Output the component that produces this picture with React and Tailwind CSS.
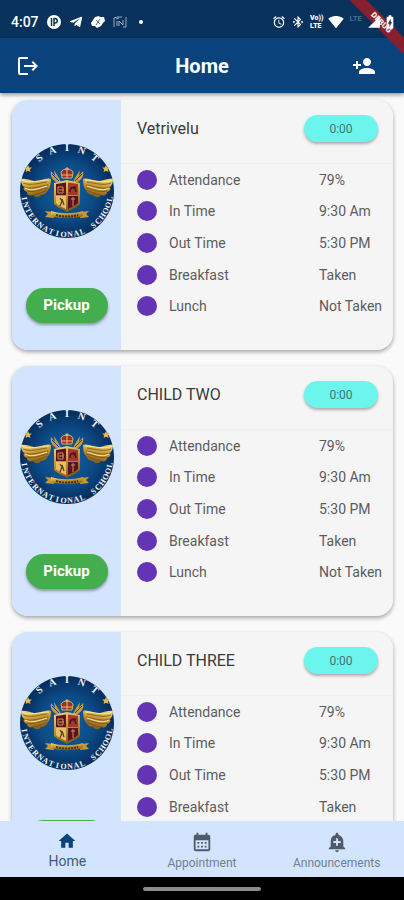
import React, { useState } from 'react';
import {
  MdAddAlert,
  MdAlarm,
  MdBatteryChargingFull,
  MdBluetoothConnected,
  MdCalendarMonth,
  MdHome,
  MdLogout,
  MdPersonAdd,
  MdSignalCellular4Bar,
  MdSignalWifi4Bar,
} from 'react-icons/md';
import { FaTelegramPlane } from 'react-icons/fa';

const CHILDREN = [
  { id: 1, name: 'Vetrivelu' },
  { id: 2, name: 'CHILD TWO' },
  { id: 3, name: 'CHILD THREE' },
];

const DETAILS = [
  ['Attendance', '79%'],
  ['In Time', '9:30 Am'],
  ['Out Time', '5:30 PM'],
  ['Breakfast', 'Taken'],
  ['Lunch', 'Not Taken'],
];

const TABS = [
  { id: 'home', label: 'Home', Icon: MdHome },
  { id: 'appointment', label: 'Appointment', Icon: MdCalendarMonth },
  { id: 'announcements', label: 'Announcements', Icon: MdAddAlert },
];

const TOP_LETTERS = 'SAINT'.split('');
const BOTTOM_LETTERS = 'INTERNATIONAL SCHOOL'.split('');

function Wing() {
  return (
    <g>
      <path
        d="M-16 -12 C-22 -14 -27 -9 -33 -10 C-38 -11 -42 -13 -46 -12 C-46 -8 -45 -6 -43 -4 C-44 -2 -43 0 -40 1 C-40 4 -37 5 -34 4 C-32 7 -28 7 -26 4 C-23 4 -20 2 -19 -1 C-17 -3 -16 -7 -16 -12Z"
        fill="url(#gold)"
      />
      <path
        d="M-44 -8 C-36 -5 -28 -8 -20 -9 M-43 -4 C-35 -1 -27 -5 -19 -6 M-40 0 C-33 2 -26 -2 -19 -3 M-34 4 C-29 3 -24 1 -20 -1"
        fill="none"
        stroke="#6b4a16"
        strokeWidth="0.7"
      />
      <path d="M-45 -11 C-37 -7 -28 -11 -18 -11 M-42 -3 C-35 1 -27 -3 -20 -5" fill="none" stroke="#fbe9a0" strokeWidth="1" />
    </g>
  );
}

function SchoolSeal() {
  return (
    <svg viewBox="-49 -49 98 98" className="size-[98px]" role="img" aria-label="School crest">
      <defs>
        <radialGradient id="seal">
          <stop offset="0" stopColor="#12629f" />
          <stop offset="0.6" stopColor="#0b4a85" />
          <stop offset="1" stopColor="#062c5c" />
        </radialGradient>
        <linearGradient id="gold" x1="0" y1="0" x2="0.3" y2="1">
          <stop offset="0" stopColor="#f5dc85" />
          <stop offset="0.5" stopColor="#c99a35" />
          <stop offset="1" stopColor="#8a601c" />
        </linearGradient>
      </defs>
      <circle r="47" fill="url(#seal)" />
      <g fill="#f3f6fa" fontFamily="Liberation Serif, serif" fontWeight="700" textAnchor="middle">
        {TOP_LETTERS.map((c, i) => (
          <text key={i} y="-40" fontSize="10" transform={`rotate(${(i - 2) * 20})`}>{c}</text>
        ))}
        {BOTTOM_LETTERS.map((c, i) => (
          <text key={i} y="46" fontSize="8" transform={`rotate(${80 - i * 8.4})`}>{c}</text>
        ))}
      </g>
      {/* side stars */}
      <path d="M-39 -26 l1.2 2.4 2.6 .2 -1.9 1.8 .6 2.6 -2.5 -1.3 -2.4 1.3 .5 -2.6 -1.9 -1.8 2.6 -.2z" fill="#e3b94f" />
      <path d="M39 -26 l1.2 2.4 2.6 .2 -1.9 1.8 .6 2.6 -2.5 -1.3 -2.4 1.3 .5 -2.6 -1.9 -1.8 2.6 -.2z" fill="#e3b94f" />
      <Wing />
      <g transform="scale(-1 1)">
        <Wing />
      </g>
      {/* crown and laurels */}
      <path d="M-11 -9 C-15 -12 -17 -15 -16 -20 L-12 -15 L-13 -21 L-8 -13 L-6 -9Z" fill="#c79b45" />
      <path d="M11 -9 C15 -12 17 -15 16 -20 L12 -15 L13 -21 L8 -13 L6 -9Z" fill="#c79b45" />
      <path d="M-15 -17 L-8 -10 M15 -17 L8 -10" stroke="#0d4c85" strokeWidth="1" />
      <path d="M-5 -13 L-6 -19 C-4 -23 4 -23 6 -19 L5 -13Z" fill="#982f2b" stroke="#d9b15a" strokeWidth="1" />
      <path d="M0 -24 V-13 M-2 -22 H2 M-5 -16 H5" stroke="#e5c06a" strokeWidth="1" />
      {/* shield */}
      <path d="M-13 -8 L0 -11 L13 -8 V13 C9 17 4 18 0 21 C-4 18 -9 17 -13 13Z" fill="url(#gold)" />
      <path d="M-11 -7 L-1 -8.500 V4 H-11Z M1 5 H11 V12 C8 15 4 16 1 18Z" fill="#5c1220" />
      <path d="M1 -8.500 L11 -7 V4 H1Z" fill="#a3382b" />
      <path d="M-11 5 H-1 V18 C-4 16 -8 15 -11 12Z" fill="#e3bf68" />
      <path d="M-9 -4 H-4 V2 H-9Z M-8 -1 H-3 M4 8 H8 M6 6 V15" stroke="#c9974a" strokeWidth="1" fill="none" />
      <path d="M3 1 C3 -5 8 -5 9 1 M4 -3 L9 -4" stroke="#45131a" strokeWidth="1.500" fill="none" />
      <path d="M-7 7 L-5 10 L-7 15 M-5 8 L-3 14" stroke="#5d3515" strokeWidth="1.200" fill="none" />
      {/* motto ribbon */}
      <path d="M-22 20 L-14 21 L-13 27 L-22 26 L-19 23Z M22 20 L14 21 L13 27 L22 26 L19 23Z" fill="#c99a3b" />
      <path d="M-16 20 C-6 23 6 23 16 20 V25 C6 28 -6 28 -16 25Z" fill="url(#gold)" />
      <path d="M-11 24 C-4 26 4 26 11 24" fill="none" stroke="#4c3110" strokeWidth="2" strokeDasharray="2 1" />
    </svg>
  );
}

function StatusBar() {
  return (
    <div className="flex h-[38px] shrink-0 items-center justify-between bg-[#08315c] pt-1.5 pr-1.5 pl-[11px] text-white">
      <div className="flex items-center gap-2">
        <span className="text-[14px] leading-4 font-medium">4:07</span>
        <svg viewBox="0 0 14 14" className="size-3.5">
          <circle cx="7" cy="7" r="7" fill="#fff" />
          <path d="M4.500 11 V3" fill="none" stroke="#08315c" strokeWidth="1.500" />
          <path d="M7 11 V3.500 H8 A2.200 2.200 0 0 1 8 8 H7" fill="none" stroke="#08315c" strokeWidth="1.500" />
        </svg>
        <FaTelegramPlane className="size-3.5" />
        <svg viewBox="0 0 14 12" className="h-3 w-3.5" fill="#fff">
          <path d="M4 1 L8 0 L9 1 L13 1 L14 5 L12 7 L10 10 L6 12 L4 10 L1 10 L0 7 L2 4Z" />
          <path d="M5 4 L9 8 M9 3 L5 9" stroke="#08315c" strokeWidth="0.7" />
        </svg>
        <svg viewBox="0 0 14 12" className="h-3 w-3.5 opacity-60" fill="none" stroke="#fff">
          <path d="M1 11 V2 L4 1 H9 M13 1 V11 H10 M4 10 V5 M6 10 V5 L10 9 V4 M3 3 L6 2" />
        </svg>
        <span className="ml-1 size-1 rounded-full bg-white" />
      </div>
      {/* sits above the debug ribbon */}
      <div className="relative z-20 flex items-center gap-[5px]">
        <MdAlarm className="size-3.5" />
        <MdBluetoothConnected className="size-3.5" />
        <span className="flex flex-col text-[7px] leading-[8px] font-black">
          <span>Vo))</span>
          <span>LTE</span>
        </span>
        <MdSignalWifi4Bar className="size-4" />
        <span className="-mt-1.5 text-[8px] leading-3 text-white/40">LTE</span>
        <MdSignalCellular4Bar className="size-3.5" />
        <MdBatteryChargingFull className="-ml-1 size-4" />
      </div>
    </div>
  );
}

function DebugBanner() {
  return (
    <div className="pointer-events-none absolute top-0 right-0 z-10 size-14 overflow-hidden">
      <div className="absolute top-[17px] -right-[27px] flex h-3 w-[100px] rotate-45 items-center justify-center bg-[#86202f] text-[8px] font-black text-white/90">
        DEBUG
      </div>
    </div>
  );
}

function ChildCard({ child }) {
  return (
    <article className="flex h-[250px] shrink-0 overflow-hidden rounded-2xl bg-[#f5f5f5] shadow-[0_2px_4px_rgba(0,0,0,0.35)]">
      <div className="flex w-[109px] flex-col items-center bg-[#d3e4ff] pt-[42px]">
        <SchoolSeal />
        <button className="mt-12 h-[35px] w-[82px] rounded-full bg-[#44ae4e] text-[15px] font-bold text-white shadow-[0_2px_3px_rgba(0,0,0,0.35)]">
          Pickup
        </button>
      </div>
      <div className="flex flex-1 flex-col pb-7">
        <header className="flex h-16 items-start justify-between border-b border-[#f0f0f0] pt-[15px] pr-[15px] pl-4">
          <h2 className="text-[16px] leading-[27px] text-[#3a3a3a]">{child.name}</h2>
          <button className="h-[27px] w-[74px] rounded-full bg-[#6cf5ec] text-[12px] text-[#3c7773] shadow-[0_2px_3px_rgba(0,0,0,0.3)]">
            0:00
          </button>
        </header>
        <dl className="flex flex-1 flex-col pl-4">
          {DETAILS.map(([label, value]) => (
            <div key={label} className="flex flex-1 items-center text-[14px] leading-5 text-[#5c5c5c]">
              <span className="mr-3 size-5 rounded-full bg-[#6534b5]" />
              <dt className="flex-1">{label}</dt>
              <dd className="w-[74px] whitespace-nowrap">{value}</dd>
            </div>
          ))}
        </dl>
      </div>
    </article>
  );
}

export default function App() {
  const [tab, setTab] = useState('home');

  return (
    <div className="relative flex h-screen flex-col overflow-hidden bg-[#fafafa] font-['Roboto',sans-serif]">
      <StatusBar />
      <header className="z-10 flex h-[55px] shrink-0 items-center justify-between bg-[#0a427c] px-4 text-white shadow-[0_2px_4px_rgba(0,0,0,0.4)]">
        <button aria-label="Log out" className="flex w-9">
          <MdLogout className="size-6" />
        </button>
        <h1 className="text-[20px] font-bold">Home</h1>
        <button aria-label="Add child" className="flex w-9">
          <MdPersonAdd className="size-6" />
        </button>
      </header>
      <DebugBanner />

      <main className="flex flex-1 flex-col gap-4 overflow-y-auto pt-[7px] pr-[11px] pl-3 [scrollbar-width:none]">
        {CHILDREN.map((c) => (
          <ChildCard key={c.id} child={c} />
        ))}
      </main>

      <nav className="z-10 grid h-14 shrink-0 grid-cols-3 bg-[#d3e4ff]">
        {TABS.map(({ id, label, Icon }) => {
          const active = tab === id;
          return (
            <button
              key={id}
              onClick={() => setTab(id)}
              className={
                active
                  ? 'flex flex-col items-center pt-2.5 text-[14px] leading-5 text-[#41597b]'
                  : 'flex flex-col items-center pt-2.5 text-[12px] leading-5 text-[#6f7f94]'
              }
            >
              <Icon className={active ? 'size-5 text-[#0a427c]' : 'size-[22px] text-[#505b69]'} />
              {label}
            </button>
          );
        })}
      </nav>
      <div className="flex h-[23px] shrink-0 items-center justify-center bg-black">
        <span className="h-1 w-[118px] rounded-full bg-[#8c8c8c]" />
      </div>
    </div>
  );
}
